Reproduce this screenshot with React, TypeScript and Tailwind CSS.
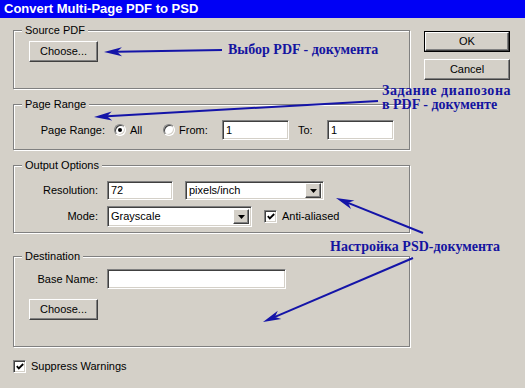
import React from "react";

const sunken =
  "border border-t-[#808080] border-l-[#808080] border-r-white border-b-white shadow-[inset_1px_1px_0_#404040,inset_-1px_-1px_0_#d4d0c8]";
const raised =
  "border border-t-white border-l-white border-r-[#404040] border-b-[#404040] shadow-[inset_-1px_-1px_0_#808080]";

function Btn({ label, w, def }: { label: string; w: string; def?: boolean }) {
  if (def) {
    return (
      <div className={`${w} h-[21px] border border-black flex`}>
        <div className={`flex-1 ${raised} flex items-center justify-center bg-[#d4d0c8]`}>{label}</div>
      </div>
    );
  }
  return (
    <div className={`${w} h-[21px] ${raised} flex items-center justify-center bg-[#d4d0c8]`}>{label}</div>
  );
}

function Field({ w, h, value }: { w: string; h: string; value?: string }) {
  return (
    <div className={`${w} ${h} ${sunken} bg-white flex items-center pl-[3px] leading-none`}>{value}</div>
  );
}

function Select({ w, h, value }: { w: string; h: string; value: string }) {
  return (
    <div className={`${w} ${h} ${sunken} bg-white flex items-center pl-[3px] pr-[2px]`}>
      <span className="flex-1">{value}</span>
      <div className={`w-[16px] h-[15px] ${raised} bg-[#d4d0c8] flex items-center justify-center`}>
        <svg width="7" height="4" viewBox="0 0 7 4">
          <polygon points="0,0 7,0 3.5,4" fill="black" />
        </svg>
      </div>
    </div>
  );
}

function Radio({ checked }: { checked?: boolean }) {
  return (
    <div className={`w-[12px] h-[12px] rounded-full ${sunken} bg-white flex items-center justify-center`}>
      {checked && <div className="w-[4px] h-[4px] rounded-full bg-black" />}
    </div>
  );
}

function Check() {
  return (
    <div className={`w-[13px] h-[13px] ${sunken} bg-white flex items-center justify-center`}>
      <svg width="8" height="7" viewBox="0 0 8 7">
        <polyline points="0.8,3.2 2.8,5.4 7.2,1" fill="none" stroke="black" strokeWidth="1.8" />
      </svg>
    </div>
  );
}

function Group({ title, h, mt, children }: { title: string; h: string; mt: string; children: React.ReactNode }) {
  return (
    <fieldset
      className={`${h} ${mt} w-[397px] border border-[#808080] shadow-[inset_1px_1px_0_#fff,1px_1px_0_#fff] px-[15px] m-0`}
    >
      <legend className="ml-[-7px] px-[3px] leading-[14px] bg-[#d4d0c8]">{title}</legend>
      {children}
    </fieldset>
  );
}

function Arrow({ x1, y1, x2, y2 }: { x1: number; y1: number; x2: number; y2: number }) {
  const dx = x2 - x1;
  const dy = y2 - y1;
  const len = Math.hypot(dx, dy);
  const ux = dx / len;
  const uy = dy / len;
  const nx = -uy;
  const ny = ux;
  const L = 18;
  const W = 4.5;
  const N = 13;
  const bx = x2 - ux * L;
  const by = y2 - uy * L;
  const pts = [
    [x2, y2],
    [bx + nx * W, by + ny * W],
    [x2 - ux * N, y2 - uy * N],
    [bx - nx * W, by - ny * W],
  ]
    .map((p) => p.join(","))
    .join(" ");
  return (
    <g>
      <line x1={x1} y1={y1} x2={x2 - ux * N} y2={y2 - uy * N} stroke="#1414a8" strokeWidth="2" />
      <polygon points={pts} fill="#1414a8" />
    </g>
  );
}

export default function App() {
  return (
    <div className="relative w-[525px] h-[388px] overflow-hidden bg-[#d4d0c8] text-black text-[11px] font-['Liberation_Sans',Arial,sans-serif]">
      <div className="h-[18px] bg-[#0000f5] text-white font-bold text-[13px] leading-[18px] pl-[4px]">
        Convert Multi-Page PDF to PSD
      </div>
      <div className="flex pl-[13px] pt-[5px]">
        <div className="flex flex-col w-[397px]">
          <Group title="Source PDF" h="h-[66px]" mt="mt-0">
            <div className="pt-[4px]">
              <Btn label="Choose..." w="w-[69px]" />
            </div>
          </Group>
          <Group title="Page Range" h="h-[53px]" mt="mt-[8px]">
            <div className="pt-[9px] flex items-center h-[29px]">
              <span className="w-[76px] text-right">Page Range:</span>
              <div className="ml-[9px]">
                <Radio checked />
              </div>
              <span className="ml-[4px] w-[33px]">All</span>
              <Radio />
              <span className="ml-[4px] w-[43px]">From:</span>
              <Field w="w-[67px]" h="h-[20px]" value="1" />
              <span className="ml-[9px] w-[29px]">To:</span>
              <Field w="w-[67px]" h="h-[20px]" value="1" />
            </div>
          </Group>
          <Group title="Output Options" h="h-[75px]" mt="mt-[8px]">
            <div className="pt-[9px] flex flex-col gap-[6px]">
              <div className="flex items-center">
                <span className="w-[69px] text-right">Resolution:</span>
                <div className="ml-[9px]">
                  <Field w="w-[66px]" h="h-[19px]" value="72" />
                </div>
                <div className="ml-[12px]">
                  <Select w="w-[139px]" h="h-[19px]" value="pixels/inch" />
                </div>
              </div>
              <div className="flex items-center">
                <span className="w-[69px] text-right">Mode:</span>
                <div className="ml-[9px]">
                  <Select w="w-[145px]" h="h-[21px]" value="Grayscale" />
                </div>
                <div className="ml-[12px]">
                  <Check />
                </div>
                <span className="ml-[5px]">Anti-aliased</span>
              </div>
            </div>
          </Group>
          <Group title="Destination" h="h-[98px]" mt="mt-[16px]">
            <div className="pt-[6px] flex flex-col gap-[10px]">
              <div className="flex items-center">
                <span className="w-[69px] text-right">Base Name:</span>
                <div className="ml-[9px]">
                  <Field w="w-[179px]" h="h-[20px]" />
                </div>
              </div>
              <Btn label="Choose..." w="w-[69px]" />
            </div>
          </Group>
          <div className="flex items-center mt-[11px]">
            <Check />
            <span className="ml-[5px]">Suppress Warnings</span>
          </div>
        </div>
        <div className="ml-[14px] pt-[8px] flex flex-col gap-[7px]">
          <Btn label="OK" w="w-[86px]" def />
          <Btn label="Cancel" w="w-[86px]" />
        </div>
      </div>

      <div className="absolute left-[228px] top-[43px] text-[#1414a0] font-bold text-[14px] leading-[14px] font-['Liberation_Serif',serif]">
        Выбор PDF - документа
      </div>
      <div className="absolute left-[382px] top-[84px] text-[#1414a0] font-bold text-[14px] leading-[14px] font-['Liberation_Serif',serif]">
        <div className="tracking-[0.6px]">Задание диапозона</div>
        <div>в PDF - документе</div>
      </div>
      <div className="absolute left-[330px] top-[240px] text-[#1414a0] font-bold text-[14px] leading-[14px] font-['Liberation_Serif',serif]">
        Настройка PSD-документа
      </div>

      <svg className="absolute inset-0 pointer-events-none" width="525" height="388">
        <Arrow x1={222} y1={50} x2={104} y2={52} />
        <Arrow x1={378} y1={101} x2={94} y2={117} />
        <Arrow x1={423} y1={233} x2={336} y2={198} />
        <Arrow x1={413} y1={258} x2={263} y2={322} />
      </svg>
    </div>
  );
}
